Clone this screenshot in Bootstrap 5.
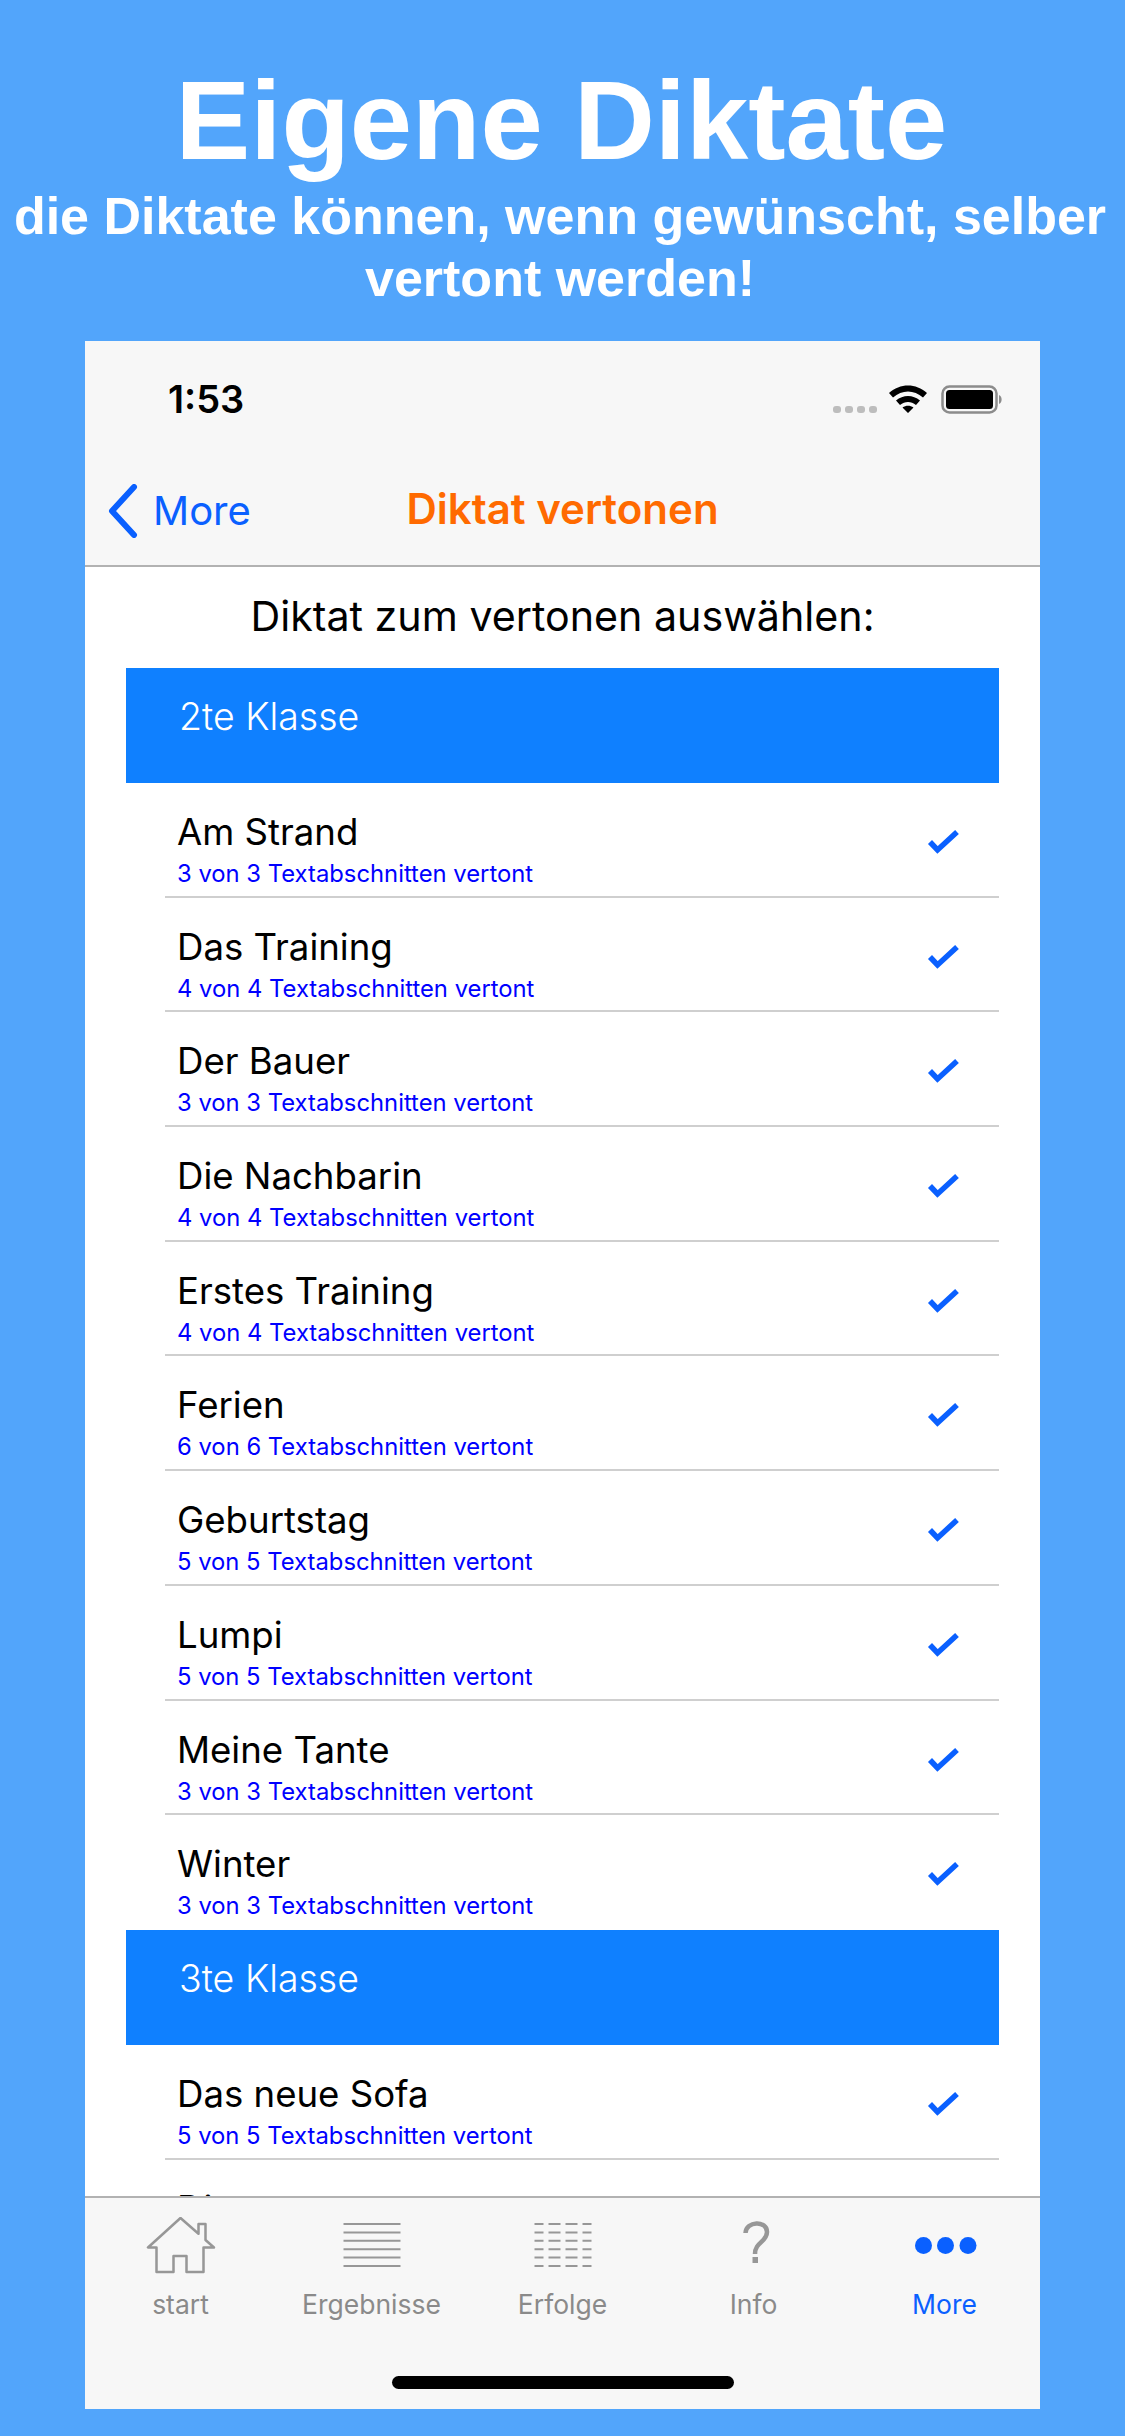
<!DOCTYPE html>
<html lang="de">
<head>
    <title>Eigene Diktate</title>
    <meta charset="utf-8">
    <meta name="viewport" content="width=device-width, initial-scale=1">
    <link href="https://cdn.jsdelivr.net/npm/bootstrap@5.3.3/dist/css/bootstrap.min.css" rel="stylesheet">
    <script src="https://cdn.jsdelivr.net/npm/bootstrap@5.3.3/dist/js/bootstrap.bundle.min.js"></script>
    <style>
        html, body { height: 2436px; overflow: hidden; }
        body { background: #52a5fb; font-family: Inter, "Liberation Sans", sans-serif; color: #000; }
        .promo { height: 341px; padding-top: 57px; font-family: "Liberation Sans", Arial, sans-serif; font-weight: 700; color: #fff; text-align: center; }
        .promo-title { font-size: 112px; line-height: 128px; margin: 0; padding-right: 2px; font-weight: 700; }
        .promo-sub { font-size: 52px; line-height: 62px; margin: 0; padding-right: 5px; font-weight: 700; white-space: nowrap; }
        .phone { width: 955px; height: 2068px; margin-left: 85px; background: #fff; }
        .top-bar { height: 226px; background: #f7f7f7; border-bottom: 2px solid #b2b2b2; flex: none; }
        .status-row { height: 120px; padding: 36px 37px 0 83px; }
        .status-icons { margin-top: 8px; }
        .clock { font-size: 38px; font-weight: 600; line-height: 44px; width: 110px; }
        .nav-row { height: 104px; }
        .back-link { left: 21px; top: 23px; color: #0a60ff; font-size: 40px; line-height: 48px; gap: 14px; }
        .nav-title { color: #ff6a00; font-size: 42px; font-weight: 600; line-height: 50px; padding-top: 23px; }
        .list-clip { flex: 1 1 auto; min-height: 0; overflow: hidden; }
        .prompt { height: 101px; padding-top: 25px; font-size: 41.2px; line-height: 48px; }
        .list-wrap { margin: 0 41px 0 41px; }
        .class-head { height: 115px; background: #0f80ff; color: #fff; font-size: 37.5px; line-height: 42px; padding: 28px 0 0 53px; font-weight: 300; }
        .dictation { height: 114.7px; margin-left: 39px; padding: 27px 40px 0 12px; border-bottom: 2px solid #cfcfcf; }
        .dictation:last-child { border-bottom: 0; }
        .dictation-name { font-size: 36.6px; line-height: 44px; }
        .dictation-info { font-size: 23.8px; line-height: 28px; color: #0000ff; margin-top: 6px; }
        .tick { margin-top: 19px; }
        .tab-bar { height: 213px; background: #f7f7f7; border-top: 2px solid #b2b2b2; flex: none; position: relative; }
        .tab-cell { width: 191px; padding-top: 19px; color: #8a8a8a; font-size: 26.5px; line-height: 32px; }
        .tab-cell svg { display: block; margin: 0 auto; height: 60px; }
        .tab-label { margin-top: 11px; }
        .tab-on { color: #0a60ff; }
        .home-line { left: 307px; bottom: 20px; width: 342px; height: 13px; border-radius: 7px; background: #000; }
    </style>
</head>
<body>

    <header class="promo">
        <h1 class="promo-title">Eigene Diktate</h1>
        <p class="promo-sub">die Diktate können, wenn gewünscht, selber<br>vertont werden!</p>
    </header>

    <main class="phone d-flex flex-column">
        <div class="top-bar">
            <div class="status-row d-flex justify-content-between">
                <div class="clock">1:53</div>
                <svg class="status-icons" width="170" height="30" viewBox="0 0 170 30">
                    <g fill="#bdbdbd">
                        <rect x="0" y="21" width="8" height="7" rx="3"/><rect x="12" y="21" width="8" height="7" rx="3"/>
                        <rect x="24" y="21" width="8" height="7" rx="3"/><rect x="36" y="21" width="8" height="7" rx="3"/>
                    </g>
                    <path d="M56 8C67 -2 83 -2 94 8L90 12.500C81 4.500 69 4.500 60 12.500Z M63 15.500C70 9.500 80 9.500 87 15.500L83 20C78 16 72 16 67 20Z M69.500 22.500C73 20 77 20 80.500 22.500L75 28Z" fill="#000"/>
                    <rect x="109.500" y="1.500" width="54" height="26" rx="7" fill="none" stroke="#8c8c8c" stroke-width="2.500"/>
                    <rect x="113" y="5" width="47" height="19" rx="3.500" fill="#000"/>
                    <path d="M166 10C169.500 11 169.500 18 166 19Z" fill="#8c8c8c"/>
                </svg>
            </div>
            <div class="nav-row position-relative text-center">
                <a class="back-link position-absolute d-flex align-items-center text-decoration-none" href="#">
                    <svg width="33" height="54" viewBox="0 0 33 54"><path d="M28 3L6 27L28 51" fill="none" stroke="#0a60ff" stroke-width="6" stroke-linecap="round" stroke-linejoin="round"/></svg>
                    <span>More</span>
                </a>
                <div class="nav-title">Diktat vertonen</div>
            </div>
        </div>

        <div class="list-clip">
            <div class="prompt text-center">Diktat zum vertonen auswählen:</div>
            <div class="list-wrap" id="lists"></div>
        </div>

        <nav class="tab-bar d-flex">
            <div class="tab-cell text-center">
                <svg width="70" height="60" viewBox="0 0 70 60"><path d="M34.500 1L2 30.500H10.500V55H27.500V39H40.500V55H57.500V30.500H68L59.500 23V7H52.500V16.800Z" fill="none" stroke="#979797" stroke-width="2.500" stroke-linejoin="round"/></svg>
                <div class="tab-label">start</div>
            </div>
            <div class="tab-cell text-center">
                <svg width="60" height="60" viewBox="0 0 60 60"><path d="M1.500 7H58.500M1.500 15.400H58.500M1.500 23.800H58.500M1.500 32.200H58.500M1.500 40.600H58.500M1.500 49H58.500" stroke="#979797" stroke-width="2"/></svg>
                <div class="tab-label">Ergebnisse</div>
            </div>
            <div class="tab-cell text-center">
                <svg width="60" height="60" viewBox="0 0 60 60"><path d="M1.500 7H58.500M1.500 15.400H58.500M1.500 23.800H58.500M1.500 32.200H58.500M1.500 40.600H58.500M1.500 49H58.500" stroke="#979797" stroke-width="2" stroke-dasharray="9 5 12 5 12 5 9 0"/></svg>
                <div class="tab-label">Erfolge</div>
            </div>
            <div class="tab-cell text-center">
                <svg width="40" height="60" viewBox="0 0 40 60"><path d="M11.500 16C12 4 33 3 33 15C33 25 21 25 21 37" fill="none" stroke="#979797" stroke-width="4.500"/><rect x="18.500" y="40" width="5.500" height="6" fill="#979797"/></svg>
                <div class="tab-label">Info</div>
            </div>
            <div class="tab-cell text-center tab-on">
                <svg width="64" height="60" viewBox="0 0 64 60"><circle cx="10.500" cy="28.500" r="8.500" fill="#0a60ff"/><circle cx="32.500" cy="28.500" r="8.500" fill="#0a60ff"/><circle cx="55" cy="28.500" r="8.500" fill="#0a60ff"/></svg>
                <div class="tab-label">More</div>
            </div>
            <div class="home-line position-absolute"></div>
        </nav>
    </main>

    <script>
        var groups = [
            ['2te Klasse', [['Am Strand',3],['Das Training',4],['Der Bauer',3],['Die Nachbarin',4],['Erstes Training',4],['Ferien',6],['Geburtstag',5],['Lumpi',5],['Meine Tante',3],['Winter',3]]],
            ['3te Klasse', [['Das neue Sofa',5],['Die neueste']]]
        ];
        var check = '<svg class="tick" width="32" height="25" viewBox="0 0 32 25"><path d="M3 13L10.500 21L30 3" fill="none" stroke="#0a60ff" stroke-width="5.500"/></svg>';
        var out = '';
        groups.forEach(function (g) {
            out += '<div class="class-head">' + g[0] + '</div><div>';
            g[1].forEach(function (r) {
                // the last row is cut by the tab bar, only the top of its name shows
                if (!r[1]) {
                    out += '<div class="dictation"><div class="dictation-name">' + r[0] + '</div></div>';
                    return;
                }
                out += '<div class="dictation d-flex justify-content-between align-items-start"><div>' +
                    '<div class="dictation-name">' + r[0] + '</div>' +
                    '<div class="dictation-info">' + r[1] + ' von ' + r[1] + ' Textabschnitten vertont</div></div>' + check + '</div>';
            });
            out += '</div>';
        });
        document.getElementById('lists').innerHTML = out;
    </script>
</body>
</html>
